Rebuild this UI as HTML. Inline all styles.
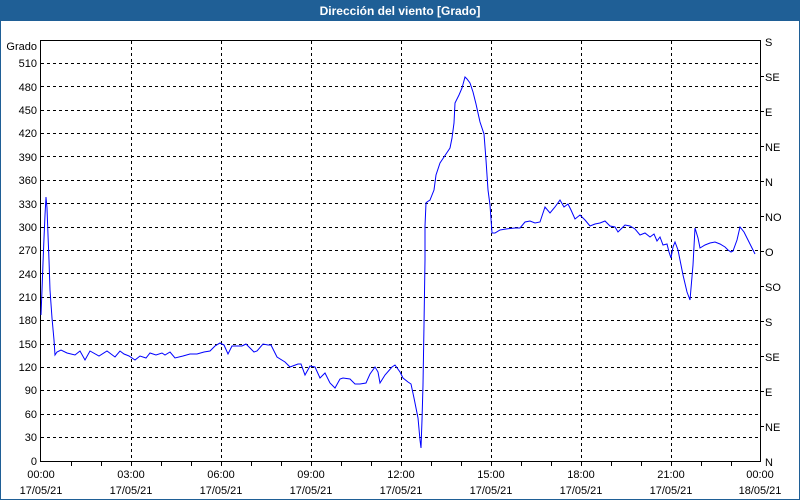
<!DOCTYPE html>
<html><head><meta charset="utf-8"><style>
html,body{margin:0;padding:0;background:#fff}
svg{display:block}
text{font-family:"Liberation Sans",sans-serif;font-size:11px;fill:#000}
</style></head><body>
<svg width="800" height="500" viewBox="0 0 800 500" xmlns="http://www.w3.org/2000/svg">
<rect x="0" y="0" width="800" height="500" fill="#fff"/>
<rect x="0.5" y="0.5" width="799" height="499" fill="none" stroke="#1f5f96" stroke-width="1"/>
<rect x="0" y="0" width="800" height="21" fill="#1f5f96"/>
<text x="400" y="15" text-anchor="middle" style="font-weight:bold;font-size:12px;fill:#fff">Dirección del viento [Grado]</text>
<g id="grid" stroke="#000" stroke-width="1" stroke-dasharray="3,3" shape-rendering="crispEdges">
<line x1="131.5" y1="41" x2="131.5" y2="461"/><line x1="221.5" y1="41" x2="221.5" y2="461"/><line x1="311.5" y1="41" x2="311.5" y2="461"/><line x1="401.5" y1="41" x2="401.5" y2="461"/><line x1="491.5" y1="41" x2="491.5" y2="461"/><line x1="581.5" y1="41" x2="581.5" y2="461"/><line x1="671.5" y1="41" x2="671.5" y2="461"/>
<line x1="41" y1="437.5" x2="760" y2="437.5"/><line x1="41" y1="414.5" x2="760" y2="414.5"/><line x1="41" y1="390.5" x2="760" y2="390.5"/><line x1="41" y1="367.5" x2="760" y2="367.5"/><line x1="41" y1="344.5" x2="760" y2="344.5"/><line x1="41" y1="320.5" x2="760" y2="320.5"/><line x1="41" y1="297.5" x2="760" y2="297.5"/><line x1="41" y1="273.5" x2="760" y2="273.5"/><line x1="41" y1="250.5" x2="760" y2="250.5"/><line x1="41" y1="227.5" x2="760" y2="227.5"/><line x1="41" y1="203.5" x2="760" y2="203.5"/><line x1="41" y1="180.5" x2="760" y2="180.5"/><line x1="41" y1="156.5" x2="760" y2="156.5"/><line x1="41" y1="133.5" x2="760" y2="133.5"/><line x1="41" y1="110.5" x2="760" y2="110.5"/><line x1="41" y1="86.5" x2="760" y2="86.5"/><line x1="41" y1="63.5" x2="760" y2="63.5"/>
</g>
<g stroke="#000" stroke-width="1" shape-rendering="crispEdges">
<line x1="40.5" y1="40" x2="40.5" y2="462"/>
<line x1="40" y1="40.5" x2="761" y2="40.5"/>
<line x1="40" y1="461.5" x2="761" y2="461.5"/>
<line x1="760.5" y1="40" x2="760.5" y2="462"/>
<line x1="71.5" y1="461" x2="71.5" y2="466"/><line x1="101.5" y1="461" x2="101.5" y2="466"/><line x1="131.5" y1="461" x2="131.5" y2="466"/><line x1="161.5" y1="461" x2="161.5" y2="466"/><line x1="191.5" y1="461" x2="191.5" y2="466"/><line x1="221.5" y1="461" x2="221.5" y2="466"/><line x1="251.5" y1="461" x2="251.5" y2="466"/><line x1="281.5" y1="461" x2="281.5" y2="466"/><line x1="311.5" y1="461" x2="311.5" y2="466"/><line x1="341.5" y1="461" x2="341.5" y2="466"/><line x1="371.5" y1="461" x2="371.5" y2="466"/><line x1="401.5" y1="461" x2="401.5" y2="466"/><line x1="431.5" y1="461" x2="431.5" y2="466"/><line x1="461.5" y1="461" x2="461.5" y2="466"/><line x1="491.5" y1="461" x2="491.5" y2="466"/><line x1="521.5" y1="461" x2="521.5" y2="466"/><line x1="551.5" y1="461" x2="551.5" y2="466"/><line x1="581.5" y1="461" x2="581.5" y2="466"/><line x1="611.5" y1="461" x2="611.5" y2="466"/><line x1="641.5" y1="461" x2="641.5" y2="466"/><line x1="671.5" y1="461" x2="671.5" y2="466"/><line x1="701.5" y1="461" x2="701.5" y2="466"/><line x1="731.5" y1="461" x2="731.5" y2="466"/>
<line x1="760" y1="76.5" x2="764" y2="76.5"/><line x1="760" y1="111.5" x2="764" y2="111.5"/><line x1="760" y1="146.5" x2="764" y2="146.5"/><line x1="760" y1="181.5" x2="764" y2="181.5"/><line x1="760" y1="216.5" x2="764" y2="216.5"/><line x1="760" y1="251.5" x2="764" y2="251.5"/><line x1="760" y1="286.5" x2="764" y2="286.5"/><line x1="760" y1="321.5" x2="764" y2="321.5"/><line x1="760" y1="356.5" x2="764" y2="356.5"/><line x1="760" y1="391.5" x2="764" y2="391.5"/><line x1="760" y1="426.5" x2="764" y2="426.5"/>
</g>
<g text-anchor="end">
<text x="37" y="50">Grado</text>
<text x="37" y="67">510</text><text x="37" y="91">480</text><text x="37" y="114">450</text><text x="37" y="137">420</text><text x="37" y="161">390</text><text x="37" y="184">360</text><text x="37" y="208">330</text><text x="37" y="231">300</text><text x="37" y="254">270</text><text x="37" y="278">240</text><text x="37" y="301">210</text><text x="37" y="324">180</text><text x="37" y="348">150</text><text x="37" y="371">120</text><text x="37" y="394">90</text><text x="37" y="418">60</text><text x="37" y="441">30</text><text x="37" y="465">0</text>
</g>
<g>
<text x="765" y="46">S</text><text x="765" y="81">SE</text><text x="765" y="116">E</text><text x="765" y="151">NE</text><text x="765" y="186">N</text><text x="765" y="221">NO</text><text x="765" y="256">O</text><text x="765" y="291">SO</text><text x="765" y="326">S</text><text x="765" y="361">SE</text><text x="765" y="396">E</text><text x="765" y="431">NE</text><text x="765" y="466">N</text>
</g>
<g text-anchor="middle">
<text x="41" y="478">00:00</text><text x="41" y="494">17/05/21</text>
<text x="131" y="478">03:00</text><text x="131" y="494">17/05/21</text>
<text x="221" y="478">06:00</text><text x="221" y="494">17/05/21</text>
<text x="311" y="478">09:00</text><text x="311" y="494">17/05/21</text>
<text x="401" y="478">12:00</text><text x="401" y="494">17/05/21</text>
<text x="491" y="478">15:00</text><text x="491" y="494">17/05/21</text>
<text x="581" y="478">18:00</text><text x="581" y="494">17/05/21</text>
<text x="671" y="478">21:00</text><text x="671" y="494">17/05/21</text>
<text x="760" y="478">00:00</text><text x="760" y="494">18/05/21</text>
</g>
<polyline fill="none" stroke="#0000ff" stroke-width="1" points="41,315 42,290 43,263 44,238 45,215 46,197 47,208 48,235 49,260 50,290 52,318 54,340 55,355 57,352 61,350 67,353 75,355 80,351 85,360 90,351 99,356 107,351 115,357 120,351 124,354 129,356 135,360 140,356 146,358 150,353 156,355 162,353 165,355 170,352 175,358 183,356 190,354 197,354 204,352 210,351 215,346 220,343 224,345 228,354 232,346 242,346 246,344 250,348 254,352 257,351 263,344 268,345 271,345 277,357 285,362 290,367 298,364 301,364 305,375 310,366 315,367 320,378 325,373 330,383 335,388 340,379 343,378 350,379 355,384 360,384 366,383 370,374 375,367 378,372 380,383 385,375 392,367 395,365 400,372 403,378 408,382 411,384 414,398 418,418 420,440 421,448 422,420 423,385 424,325 425,260 425,226 426,203 427,202 430,200 434,190 436,175 440,163 444,157 450,148 452,138 454,123 455,103 459,95 462,88 465,77 467,79 470,83 473,92 476,104 480,122 484,134 486,160 488,190 490,205 492,233 495,233 500,230 506,229 515,228 520,228 525,222 530,221 535,223 540,222 545,207 550,213 555,207 560,200 564,207 568,204 571,210 575,219 580,215 585,220 590,226 595,224 600,223 605,221 610,226 615,227 618,232 622,228 625,225 630,226 635,229 640,235 645,233 650,237 654,234 657,241 660,237 663,245 667,244 669,252 671,258 673,247 675,242 678,250 683,275 687,292 690,300 693,265 695,228 698,238 700,248 705,245 710,243 715,242 720,244 725,247 728,250 731,252 733,251 737,240 740,227 744,232 750,244 755,254"/>
</svg>
</body></html>
